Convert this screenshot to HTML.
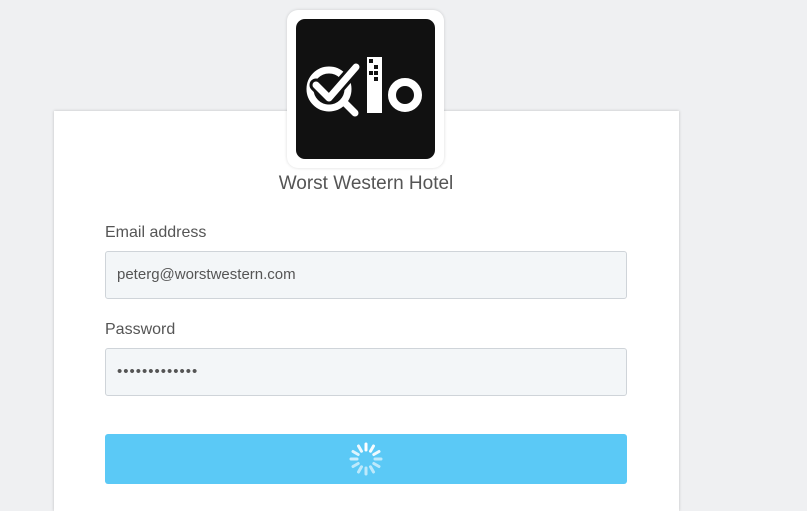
<!DOCTYPE html>
<html><head><style>
body{margin:0;width:807px;height:492px;background:#eff0f2;font-family:"Liberation Sans",sans-serif;position:relative;overflow:hidden}
.card{position:absolute;left:54px;top:111px;width:625px;height:400px;background:#fff;box-shadow:0 0 3px rgba(0,0,0,.2)}
.logo{position:absolute;left:287px;top:10px;width:157px;height:158px;background:#fff;border-radius:11px;box-shadow:0 0 3px rgba(0,0,0,.15)}
.inner{position:absolute;left:9px;top:9px;width:139px;height:140px;background:#111;border-radius:9px}
.title{position:absolute;left:0;width:732px;top:173px;text-align:center;font-size:19px;color:#555}
.lbl{position:absolute;left:105px;font-size:16px;color:#555}
.inp{position:absolute;left:105px;background:#f3f6f8;border:1px solid #cfd4d9;border-radius:3px;font-size:15px;color:#555;line-height:46px;padding-left:11px;box-sizing:border-box;width:522px;height:48px}
.btn{position:absolute;left:105px;top:434px;width:522px;height:50px;background:#5bc9f6;border-radius:3px}
</style></head><body>
<div class="card"></div>
<div class="logo"><div class="inner">
<svg width="139" height="140" viewBox="0 0 139 140">
<g fill="none">
<circle cx="33" cy="70" r="19" stroke="#fff" stroke-width="7"/>
<path d="M20 66 L33 79 L60 48" stroke="#111" stroke-width="13" stroke-linecap="round" stroke-linejoin="round"/>
<path d="M20 66 L33 79 L60 48" stroke="#fff" stroke-width="7" stroke-linecap="round" stroke-linejoin="round"/>
<path d="M49 84 L59 94" stroke="#fff" stroke-width="7" stroke-linecap="round"/>
<circle cx="109" cy="76" r="13" stroke="#fff" stroke-width="8"/>
</g>
<rect x="71" y="38" width="15" height="56" fill="#fff"/>
<rect x="73" y="40" width="4" height="4" fill="#111"/>
<rect x="78" y="46" width="4" height="4" fill="#111"/>
<rect x="73" y="52" width="4" height="4" fill="#111"/>
<rect x="78" y="52" width="4" height="4" fill="#111"/>
<rect x="78" y="58" width="4" height="4" fill="#111"/>
</svg></div></div>
<div class="title">Worst Western Hotel</div>
<div class="lbl" style="top:224px">Email address</div>
<div class="inp" style="top:251px">peterg@worstwestern.com</div>
<div class="lbl" style="top:321px">Password</div>
<div class="inp" style="top:348px;letter-spacing:1px">•••••••••••••</div>
<div class="btn"><svg width="522" height="50"><g transform="translate(261 25)" stroke="#fff" stroke-width="3" stroke-linecap="round">
<line x1="0" y1="-9" x2="0" y2="-15" opacity="1"/>
<line x1="0" y1="-9" x2="0" y2="-15" transform="rotate(30)" opacity=".95"/>
<line x1="0" y1="-9" x2="0" y2="-15" transform="rotate(60)" opacity=".9"/>
<line x1="0" y1="-9" x2="0" y2="-15" transform="rotate(90)" opacity=".6"/>
<line x1="0" y1="-9" x2="0" y2="-15" transform="rotate(120)" opacity=".6"/>
<line x1="0" y1="-9" x2="0" y2="-15" transform="rotate(150)" opacity=".6"/>
<line x1="0" y1="-9" x2="0" y2="-15" transform="rotate(180)" opacity=".6"/>
<line x1="0" y1="-9" x2="0" y2="-15" transform="rotate(210)" opacity=".6"/>
<line x1="0" y1="-9" x2="0" y2="-15" transform="rotate(240)" opacity=".6"/>
<line x1="0" y1="-9" x2="0" y2="-15" transform="rotate(270)" opacity=".7"/>
<line x1="0" y1="-9" x2="0" y2="-15" transform="rotate(300)" opacity=".8"/>
<line x1="0" y1="-9" x2="0" y2="-15" transform="rotate(330)" opacity=".9"/>
</g></svg></div>
</body></html>
